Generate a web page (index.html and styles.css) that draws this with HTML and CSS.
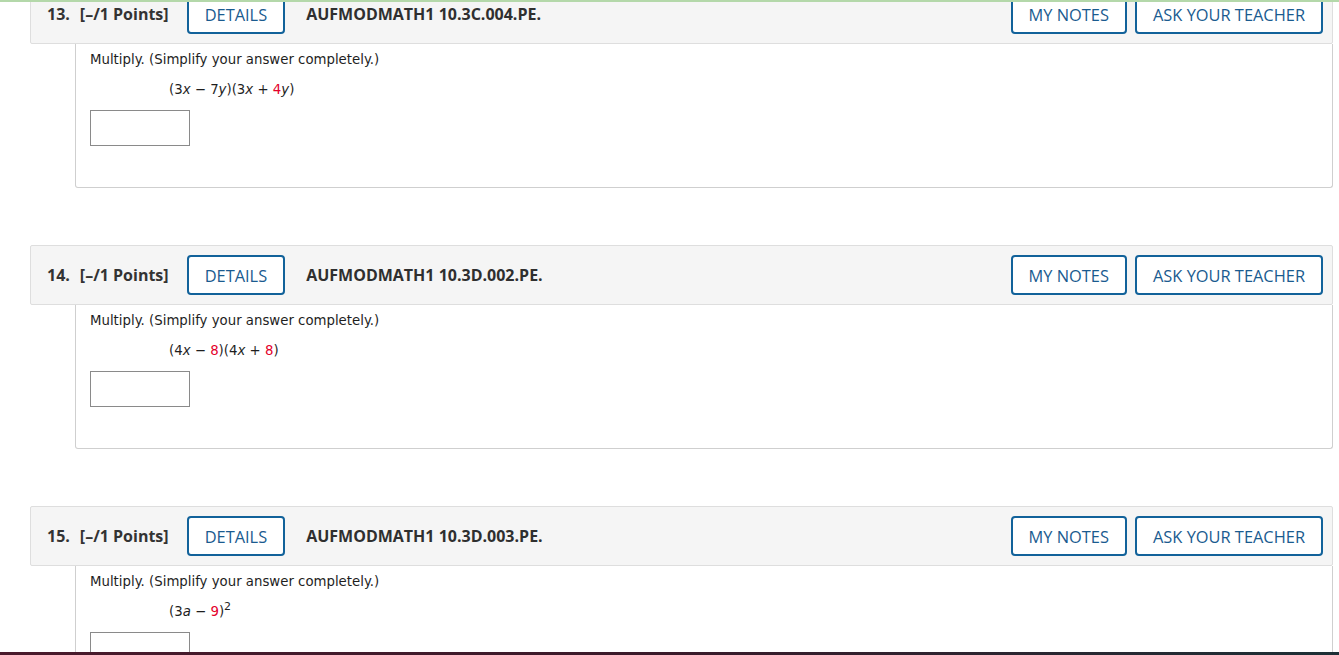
FILE: index.html
```html
<!DOCTYPE html>
<html lang="en">
<head>
  <meta charset="UTF-8">
  <title>Assignment</title>
  <link rel="stylesheet" href="styles.css">
</head>
<body>

  <div class="top-line"></div>

  <!-- Questions -->
  <div class="questions">

    <div class="question">
      <div class="q-header">
        <span class="q-num">13.</span>
        <span class="q-points">[&ndash;/1 Points]</span>
        <button class="btn">DETAILS</button>
        <span class="q-code">AUFMODMATH1 10.3C.004.PE.</span>
        <div class="q-actions">
          <button class="btn">MY NOTES</button>
          <button class="btn">ASK YOUR TEACHER</button>
        </div>
      </div>
      <div class="q-body">
        <p class="prompt">Multiply. (Simplify your answer completely.)</p>
        <p class="expr">(3<i>x</i> &minus; 7<i>y</i>)(3<i>x</i> + <span class="red">4</span><i>y</i>)</p>
        <input class="answer" type="text">
      </div>
    </div>

    <div class="question">
      <div class="q-header">
        <span class="q-num">14.</span>
        <span class="q-points">[&ndash;/1 Points]</span>
        <button class="btn">DETAILS</button>
        <span class="q-code">AUFMODMATH1 10.3D.002.PE.</span>
        <div class="q-actions">
          <button class="btn">MY NOTES</button>
          <button class="btn">ASK YOUR TEACHER</button>
        </div>
      </div>
      <div class="q-body">
        <p class="prompt">Multiply. (Simplify your answer completely.)</p>
        <p class="expr">(4<i>x</i> &minus; <span class="red">8</span>)(4<i>x</i> + <span class="red">8</span>)</p>
        <input class="answer" type="text">
      </div>
    </div>

    <div class="question">
      <div class="q-header">
        <span class="q-num">15.</span>
        <span class="q-points">[&ndash;/1 Points]</span>
        <button class="btn">DETAILS</button>
        <span class="q-code">AUFMODMATH1 10.3D.003.PE.</span>
        <div class="q-actions">
          <button class="btn">MY NOTES</button>
          <button class="btn">ASK YOUR TEACHER</button>
        </div>
      </div>
      <div class="q-body">
        <p class="prompt">Multiply. (Simplify your answer completely.)</p>
        <p class="expr">(3<i>a</i> &minus; <span class="red">9</span>)<sup>2</sup></p>
        <input class="answer" type="text">
      </div>
    </div>

  </div>

  <div class="taskbar"></div>

</body>
</html>
```

FILE: styles.css
```css
* {
  box-sizing: border-box;
}
html, body {
  height: 100%;
  overflow: hidden;
}
body {
  margin: 0;
  background: #fff;
  font-family: "Open Sans", Arial, sans-serif;
  color: #333;
}
.top-line {
  position: fixed;
  top: 0;
  left: 0;
  right: 0;
  height: 2px;
  background: #b4d8aa;
  z-index: 10;
}
.taskbar {
  position: fixed;
  left: 0;
  right: 0;
  bottom: 0;
  height: 3px;
  background: linear-gradient(90deg, #4a1a2c 0%, #3a1a2a 50%, #1d3036 100%);
  z-index: 10;
}
.questions {
  margin-top: -16px;
  padding: 0 6px 0 30px;
}
.question {
  margin-bottom: 57px;
}
.q-header {
  display: flex;
  align-items: center;
  height: 60px;
  padding: 0 9px 0 16px;
  background: #f5f5f5;
  border: 1px solid #dedede;
  border-radius: 2px;
}
.q-num {
  font-weight: bold;
  font-size: 16px;
  margin-right: 10px;
}
.q-points {
  font-weight: bold;
  font-size: 16px;
  margin-right: 18px;
}
.q-code {
  font-weight: bold;
  font-size: 16px;
  margin-left: 21px;
  color: #2f2f2f;
}
.q-actions {
  margin-left: auto;
  display: flex;
  gap: 8px;
}
.btn {
  height: 40px;
  padding: 0 16px;
  background: #fff;
  border: 2px solid #12629a;
  border-radius: 4px;
  color: #1a5b8f;
  font-family: "Open Sans", Arial, sans-serif;
  font-size: 16.4px;
  cursor: pointer;
}
.q-body {
  margin-left: 45px;
  padding: 8px 14px 41px;
  border: 1px solid #cfcfcf;
  border-top: none;
  border-radius: 0 0 3px 3px;
  font-family: "DejaVu Sans", Verdana, sans-serif;
  font-size: 13.3px;
  color: #1e1e1e;
}
.prompt {
  margin: 0;
  line-height: 16px;
}
.expr {
  margin: 14px 0 12px 79px;
  line-height: 16px;
}
.expr sup {
  font-size: 11px;
  line-height: 0;
  vertical-align: 6px;
}
.red {
  color: #e4002b;
}
.answer {
  display: block;
  width: 100px;
  height: 36px;
  border: 1px solid #8a8a8a;
  border-radius: 0;
  background: #fff;
}
```
